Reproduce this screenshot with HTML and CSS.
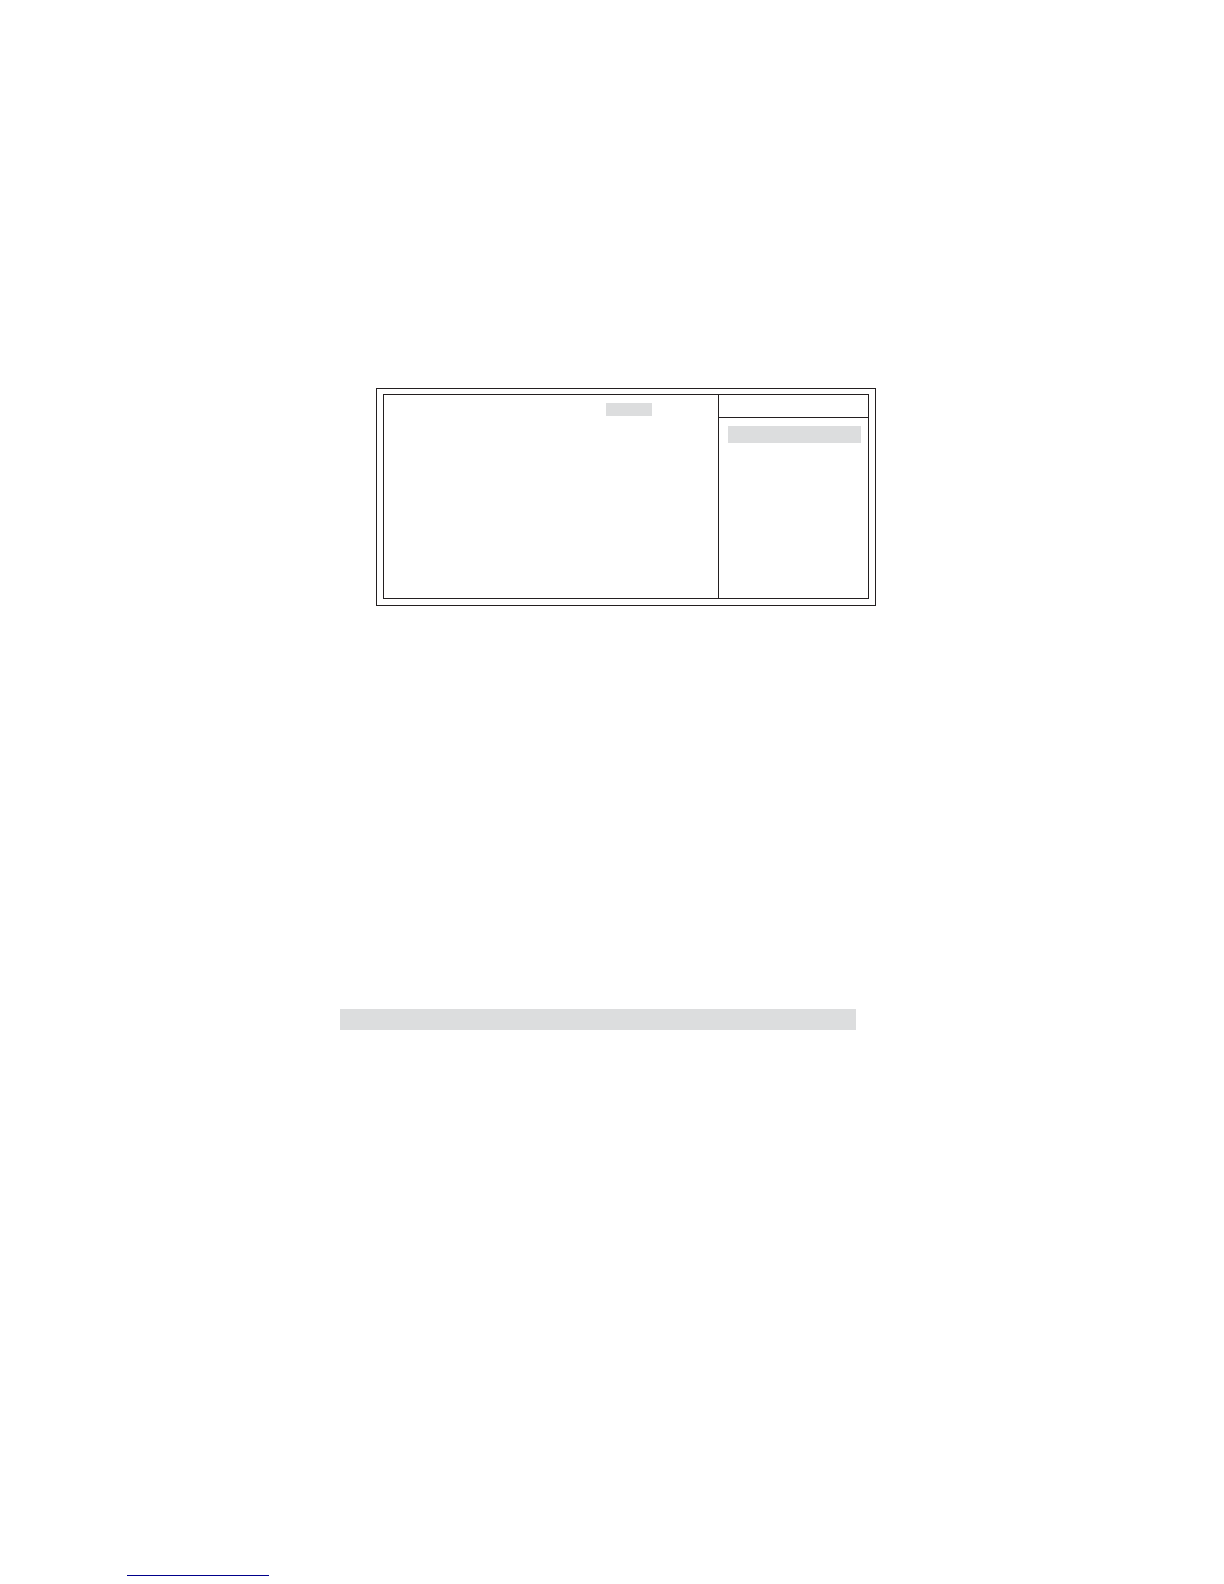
FILE: index.html
```html
<!DOCTYPE html>
<html lang="en">
<head>
<meta charset="utf-8">
<title>Setup</title>
<link rel="stylesheet" href="styles.css">
</head>
<body>
<main class="page">
  <section class="frame">
    <div class="panel">
      <div class="options">
        <div class="value"></div>
      </div>
      <aside class="help">
        <div class="help-head"></div>
        <div class="help-body">
          <div class="help-level"></div>
        </div>
      </aside>
    </div>
  </section>
  <div class="band"></div>
  <footer class="foot">
    <div class="rule"></div>
  </footer>
</main>
</body>
</html>
```

FILE: styles.css
```css
:root {
  --line: #231f20;
  --shade: #dcddde;
}

* {
  box-sizing: border-box;
}

body {
  margin: 0;
  background: #fff;
  font-family: "Liberation Sans", Arial, sans-serif;
}

.page {
  display: flex;
  flex-direction: column;
  min-height: 100vh;
  padding-top: 388px;
}

/* Double-ruled setup screen */
.frame {
  display: grid;
  margin: 0 calc(100% * 348 / 1224) 0 calc(100% * 376 / 1224);
  padding: 5px 6px 6px;
  border: 1px solid var(--line);
}

.panel {
  display: grid;
  grid-template-columns: 334fr 150fr;
  min-height: 205px;
  border: 1px solid var(--line);
}

.options {
  display: grid;
  grid-template-columns: 222fr 46fr 66fr;
  align-items: start;
  padding-top: 8px;
}

.value {
  grid-column: 2;
  height: 13px;
  background: var(--shade);
}

.help {
  border-left: 1px solid var(--line);
}

.help-head {
  height: 23px;
  border-bottom: 1px solid var(--line);
}

.help-body {
  padding: 8px 7px 8px 9px;
}

.help-level {
  height: 17px;
  background: var(--shade);
}

/* Shaded table heading */
.band {
  height: 21px;
  margin: 403px calc(100% * 368 / 1224) 0 calc(100% * 340 / 1224);
  background: var(--shade);
}

.foot {
  margin-top: auto;
  padding: 0 127px 8px;
}

.rule {
  width: 142px;
  border-top: 1px solid #00008b;
}
```
